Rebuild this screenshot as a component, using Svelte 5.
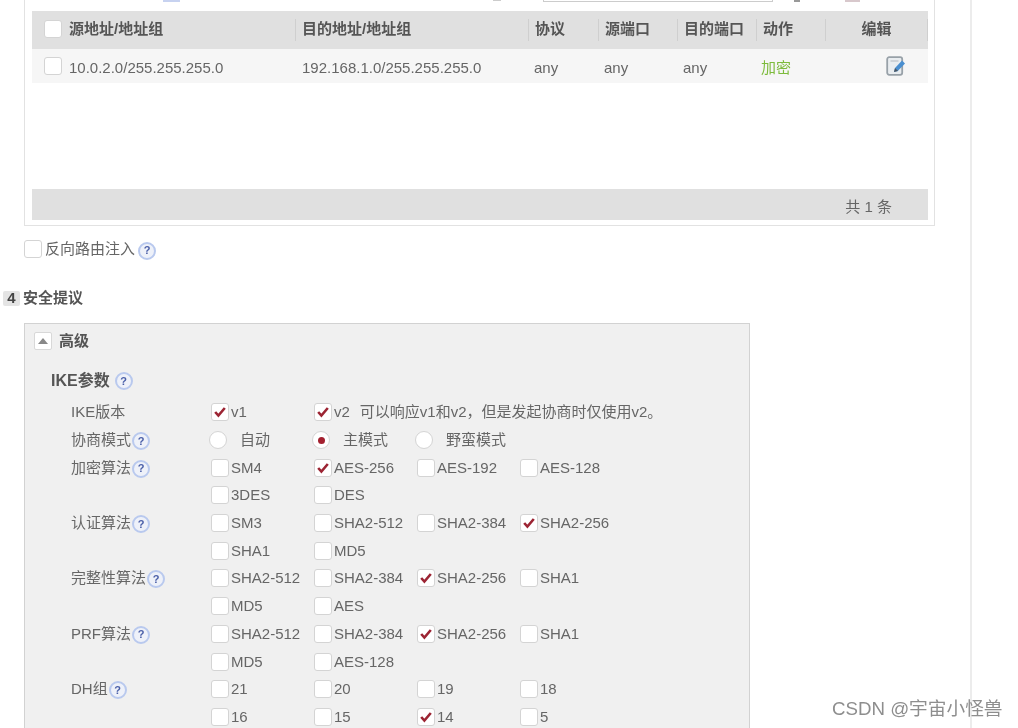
<script>
  // one row per line of the IKE form; c = checked, r = radio
  const rows = [
    { label: 'IKE版本', items: [{ t: 'v1', c: true }, { t: 'v2', c: true, note: '可以响应v1和v2，但是发起协商时仅使用v2。' }] },
    { label: '协商模式', help: true, radio: true, items: [{ t: '自动' }, { t: '主模式', c: true }, { t: '野蛮模式' }] },
    { label: '加密算法', help: true, items: [{ t: 'SM4' }, { t: 'AES-256', c: true }, { t: 'AES-192' }, { t: 'AES-128' }] },
    { items: [{ t: '3DES' }, { t: 'DES' }] },
    { label: '认证算法', help: true, items: [{ t: 'SM3' }, { t: 'SHA2-512' }, { t: 'SHA2-384' }, { t: 'SHA2-256', c: true }] },
    { items: [{ t: 'SHA1' }, { t: 'MD5' }] },
    { label: '完整性算法', help: true, items: [{ t: 'SHA2-512' }, { t: 'SHA2-384' }, { t: 'SHA2-256', c: true }, { t: 'SHA1' }] },
    { items: [{ t: 'MD5' }, { t: 'AES' }] },
    { label: 'PRF算法', help: true, items: [{ t: 'SHA2-512' }, { t: 'SHA2-384' }, { t: 'SHA2-256', c: true }, { t: 'SHA1' }] },
    { items: [{ t: 'MD5' }, { t: 'AES-128' }] },
    { label: 'DH组', help: true, items: [{ t: '21' }, { t: '20' }, { t: '19' }, { t: '18' }] },
    { items: [{ t: '16' }, { t: '15' }, { t: '14', c: true }, { t: '5' }] },
  ];
  const cols = [
    { name: '源地址/地址组', w: 264, check: true },
    { name: '目的地址/地址组', w: 233 },
    { name: '协议', w: 70 },
    { name: '源端口', w: 79 },
    { name: '目的端口', w: 79 },
    { name: '动作', w: 69 },
    { name: '编辑', w: 102, center: true },
  ];
</script>

{#snippet help()}
  <span class="help">?</span>
{/snippet}

{#snippet box(checked)}
  <span class="box">
    {#if checked}
      <svg viewBox="0 0 16 16" width="16" height="16"><path d="M3.2 8l3.2 3.6L12.8 4" fill="none" stroke="#9c2433" stroke-width="2.6" /></svg>
    {/if}
  </span>
{/snippet}

<div class="page">
  <div class="main">
    <div class="rule-box">
      <div class="toolbar">
        <span class="bit bit-a"></span>
        <span class="bit bit-b"></span>
        <span class="bit bit-c"></span>
        <span class="bit bit-d"></span>
        <span class="tool-input"></span>
      </div>
      <div class="thead">
        {#each cols as c}
          <div class="th" class:center={c.center} style="width:{c.w}px">
            {#if c.check}{@render box(false)}{/if}
            {c.name}
          </div>
        {/each}
      </div>
      <div class="trow">
        <div class="td" style="width:264px">{@render box(false)}10.0.2.0/255.255.255.0</div>
        <div class="td" style="width:232px">192.168.1.0/255.255.255.0</div>
        <div class="td" style="width:70px">any</div>
        <div class="td" style="width:79px">any</div>
        <div class="td" style="width:78px">any</div>
        <div class="td green" style="width:69px">加密</div>
        <div class="td edit" style="width:104px">
          <svg viewBox="0 0 20 20" width="20" height="20">
            <rect x="1.2" y="1.2" width="15" height="17.6" rx="2" fill="#e9edf0" stroke="#98a1a8" stroke-width="1.8" />
            <path d="M4.5 5h8" stroke="#c4cad0" stroke-width="1.5" />
            <path d="M8 16l1-4 7-7.5 3 3-7.2 7.5z" fill="#4a8fd0" />
            <path d="M8 16l1-4 3 3z" fill="#4d5660" />
          </svg>
        </div>
      </div>
      <div class="spacer"></div>
      <div class="tfoot">共 1 条</div>
    </div>

    <div class="inject">{@render box(false)}<span>反向路由注入</span>{@render help()}</div>

    <div class="section">
      <span class="step">4</span>
      <span>安全提议</span>
    </div>

    <div class="panel">
      <div class="panel-head">
        <span class="toggle"><i></i></span>
        <b>高级</b>
      </div>
      <div class="ike-title">IKE参数 {@render help()}</div>
      <div class="form">
        {#each rows as r}
          <div class="row">
            <div class="label">{r.label ?? ''}{#if r.help}{@render help()}{/if}</div>
            {#each r.items as it}
              <div class="opt" class:radio-opt={r.radio}>
                {#if r.radio}
                  <span class="radio" class:on={it.c}></span>
                {:else}
                  {@render box(it.c)}
                {/if}
                <span class="opt-text">{it.t}</span>
                {#if it.note}<span class="note">{it.note}</span>{/if}
              </div>
            {/each}
          </div>
        {/each}
      </div>
    </div>
  </div>
  <div class="side"></div>
  <div class="mark">CSDN @宇宙小怪兽</div>
</div>

<style>
  :global(body) { margin: 0; background: #fff; }
  .page {
    position: relative; width: 1018px; height: 728px; overflow: hidden; display: flex;
    font: 15px/1.2 "Liberation Sans", "Noto Sans CJK SC", sans-serif; color: #666;
    filter: blur(0.6px);
  }
  .main { width: 972px; flex: none; padding-left: 24px; box-sizing: border-box; border-right: 2px solid #ececec; }
  .rule-box {
    width: 911px; height: 226px; box-sizing: border-box; padding: 0 6px 5px 7px;
    border: 1px solid #e2e2e2; border-top: 0; display: flex; flex-direction: column;
  }
  .toolbar { height: 11px; flex: none; position: relative; }
  .bit { position: absolute; top: 0; height: 2px; }
  .bit-a { left: 131px; width: 17px; background: #c7d2f0; }
  .bit-b { left: 461px; width: 8px; height: 1px; background: #ccc; }
  .bit-c { left: 762px; width: 6px; background: #999; }
  .bit-d { left: 813px; width: 15px; background: #d8c8cc; }
  .tool-input { position: absolute; left: 511px; top: -2px; width: 230px; height: 4px; box-sizing: border-box; border: 1px solid #ccc; }
  .thead { height: 38px; flex: none; background: #e0e0e0; display: flex; align-items: center; }
  .th {
    height: 22px; display: flex; align-items: center; gap: 7px; padding: 0 0 2px 6px; box-sizing: border-box;
    border-right: 1px solid #cfcfcf; font-weight: 700; color: #555; flex: none;
  }
  .th:first-child { padding-left: 12px; }
  .th.center { justify-content: center; padding-right: 6px; }
  .trow { height: 34px; flex: none; background: #f6f6f6; display: flex; align-items: center; }
  .td { display: flex; align-items: center; gap: 7px; padding: 3px 0 0 6px; box-sizing: border-box; flex: none; }
  .td:first-child { padding-left: 12px; }
  .td .box { margin-top: -3px; }
  .green { color: #7dbb3c; }
  .edit { justify-content: center; padding: 0 0 0 40px; }
  .spacer { flex: 1; }
  .tfoot {
    height: 31px; flex: none; background: #e0e0e0; display: flex; align-items: center; box-sizing: border-box;
    justify-content: flex-end; padding: 4px 36px 0 0; color: #666;
  }
  .box {
    width: 16px; height: 16px; flex: none; display: inline-flex; background: #fff;
    border: 1px solid #d4d4d4; border-radius: 3px; box-sizing: content-box;
  }
  .inject { display: flex; align-items: center; gap: 3px; margin-top: 11px; height: 24px; }
  .inject .help { margin: 3px 0 0 0; }
  .help {
    width: 14px; height: 14px; flex: none; display: inline-flex; align-items: center; justify-content: center;
    border: 2px solid #b9c9ee; border-radius: 50%; background: #eef1f9; color: #4a5fa8;
    font-size: 11px; font-weight: 700; line-height: 1;
  }
  .section { display: flex; align-items: center; gap: 3px; margin: 27px 0 0 -21px; height: 20px; font-weight: 700; color: #555; }
  .step {
    width: 17px; height: 15px; background: #e4e4e4; border-radius: 2px; color: #444;
    display: flex; align-items: center; justify-content: center; font-size: 15px;
  }
  .panel { width: 726px; margin-top: 15px; box-sizing: border-box; height: 500px; background: #f0f0f0; border: 1px solid #d2d2d2; padding-left: 9px; }
  .panel-head { height: 33px; display: flex; align-items: center; gap: 7px; color: #555; }
  .panel-head b { font-weight: 700; }
  .toggle {
    width: 16px; height: 16px; background: #fff; border: 1px solid #d8d8d8; border-radius: 2px;
    display: flex; align-items: center; justify-content: center;
  }
  .toggle i { width: 0; height: 0; border: 5px solid transparent; border-top: 0; border-bottom: 6px solid #888; }
  .ike-title { margin: 12px 0 0 17px; height: 24px; display: flex; align-items: center; gap: 5px; font-size: 16px; font-weight: 700; color: #555; }
  .form { margin: 5.5px 0 0 37px; }
  .row { height: 27.7px; display: grid; grid-template-columns: 140px repeat(4, 103px); align-items: center; }
  .label { display: flex; align-items: center; gap: 1px; }
  .label .help { margin-top: 2px; }
  .opt { display: flex; align-items: center; gap: 2px; white-space: nowrap; }
  .radio-opt { gap: 13px; margin-left: -2px; }
  .note { margin-left: 8px; }
  .radio {
    width: 16px; height: 16px; flex: none; background: #fff; border: 1px solid #d4d4d4; border-radius: 50%;
    display: inline-flex; align-items: center; justify-content: center;
  }
  .radio.on::after { content: ""; width: 7px; height: 7px; border-radius: 50%; background: #a3202f; }
  .side { flex: 1; }
  .mark { position: absolute; left: 832px; top: 698px; font-size: 18.7px; color: #8e8e8e; white-space: nowrap; }
</style>
